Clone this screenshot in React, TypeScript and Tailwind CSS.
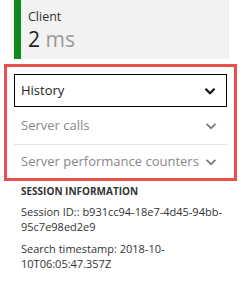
type Row = {
  label: string;
  active?: boolean;
};

const rows: Row[] = [
  { label: "History", active: true },
  { label: "Server calls" },
  { label: "Server performance counters" },
];

function Chevron({ dark }: { dark?: boolean }) {
  return (
    <svg
      width="12"
      height="8"
      viewBox="0 0 12 8"
      className="shrink-0"
      fill="none"
      stroke={dark ? "#111111" : "#7a7a7a"}
      strokeWidth={dark ? 2.2 : 1.7}
    >
      <path d="M1.5 1.8 6 6.2 10.5 1.8" />
    </svg>
  );
}

export default function App() {
  return (
    <div className="w-[244px] h-[293px] bg-white overflow-hidden font-['Open_Sans',sans-serif] text-[#333333]">
      {/* Client timing card */}
      <div className="ml-[14px] w-[215px] h-[59px] bg-[#f2f2f2] flex">
        <div className="w-[7px] bg-[#0f8a1c]" />
        <div className="pl-[7px] pt-[8px]">
          <div className="text-[12.5px] leading-[18px] text-[#333]">Client</div>
          <div className="text-[21px] leading-[26px]">
            <span className="text-[#222]">2</span>{" "}
            <span className="text-[#9a9a9a]">ms</span>
          </div>
        </div>
      </div>

      {/* Highlighted section list */}
      <div className="mt-[5px] ml-[4px] w-[233px] h-[117px] border-[3px] border-[#e8504c] px-[7px] pt-[7px]">
        {rows.map((row, i) =>
          row.active ? (
            <div
              key={row.label}
              className="h-[33px] border border-black flex items-center justify-between pl-[6px] pr-[10px]"
            >
              <span className="text-[13px] whitespace-nowrap text-[#222]">{row.label}</span>
              <Chevron dark />
            </div>
          ) : (
            <div
              key={row.label}
              className={
                i === 1
                  ? "h-[38px] border-b border-[#e3e3e3] flex items-center justify-between pl-[7px] pr-[10px] pt-[1px]"
                  : "h-[33px] flex items-center justify-between pl-[7px] pr-[10px]"
              }
            >
              <span className="text-[13px] whitespace-nowrap text-[#888]">{row.label}</span>
              <Chevron />
            </div>
          )
        )}
      </div>

      {/* Session information */}
      <div className="pl-[21px] pr-[20px] mt-[3px] text-[11px] leading-[15px] text-[#333]">
        <div className="font-bold text-[10px]">SESSION INFORMATION</div>
        <div className="mt-[5px]">Session ID:: b931cc94-18e7-4d45-94bb-95c7e98ed2e9</div>
        <div className="mt-[7px]">Search timestamp: 2018-10-10T06:05:47.357Z</div>
      </div>
    </div>
  );
}
